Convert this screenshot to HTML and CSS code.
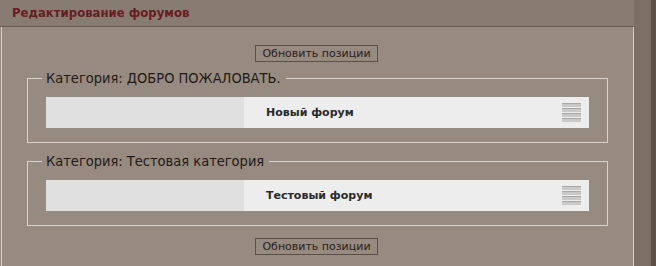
FILE: index.html
```html
<!DOCTYPE html>
<html lang="ru">
<head>
  <meta charset="UTF-8">
  <title>Редактирование форумов</title>
  <link rel="stylesheet" href="styles.css">
</head>
<body>
  <div class="page">
    <div class="main">
      <div class="header">Редактирование форумов</div>
      <div class="panel">
        <div class="actions"><button class="btn">Обновить позиции</button></div>

        <fieldset class="category">
          <legend>Категория: ДОБРО ПОЖАЛОВАТЬ.</legend>
          <div class="forum">
            <div class="forum-side"></div>
            <div class="forum-name">
              <span>Новый форум</span>
              <svg class="handle" width="19" height="20" viewBox="0 0 19 20">
                <g>
                  <rect x="0" y="0" width="19" height="1" fill="#a8a8a8"/>
                  <rect x="0" y="1" width="19" height="3" fill="#c9c9c9"/>
                  <rect x="0" y="5" width="19" height="1" fill="#a8a8a8"/>
                  <rect x="0" y="6" width="19" height="3" fill="#c9c9c9"/>
                  <rect x="0" y="10" width="19" height="1" fill="#a8a8a8"/>
                  <rect x="0" y="11" width="19" height="3" fill="#c9c9c9"/>
                  <rect x="0" y="15" width="19" height="1" fill="#a8a8a8"/>
                  <rect x="0" y="16" width="19" height="3" fill="#c9c9c9"/>
                </g>
              </svg>
            </div>
          </div>
        </fieldset>

        <fieldset class="category">
          <legend>Категория: Тестовая категория</legend>
          <div class="forum">
            <div class="forum-side"></div>
            <div class="forum-name">
              <span>Тестовый форум</span>
              <svg class="handle" width="19" height="20" viewBox="0 0 19 20">
                <g>
                  <rect x="0" y="0" width="19" height="1" fill="#a8a8a8"/>
                  <rect x="0" y="1" width="19" height="3" fill="#c9c9c9"/>
                  <rect x="0" y="5" width="19" height="1" fill="#a8a8a8"/>
                  <rect x="0" y="6" width="19" height="3" fill="#c9c9c9"/>
                  <rect x="0" y="10" width="19" height="1" fill="#a8a8a8"/>
                  <rect x="0" y="11" width="19" height="3" fill="#c9c9c9"/>
                  <rect x="0" y="15" width="19" height="1" fill="#a8a8a8"/>
                  <rect x="0" y="16" width="19" height="3" fill="#c9c9c9"/>
                </g>
              </svg>
            </div>
          </div>
        </fieldset>

        <div class="actions bottom"><button class="btn">Обновить позиции</button></div>
      </div>
    </div>
    <div class="side"></div>
  </div>
</body>
</html>
```

FILE: styles.css
```css
body {
  margin: 0;
  font-family: "DejaVu Sans", Verdana, sans-serif;
  background: #978a80;
  height: 266px;
  overflow: hidden;
}
.page {
  display: flex;
  height: 266px;
}
.main {
  width: 634px;
  background: #978a80;
}
.side {
  flex: 1;
  background: #7b6f66;
  border-right: 5px solid #5c514a;
}
.header {
  height: 26px;
  line-height: 26px;
  padding-left: 12px;
  background: #887c72;
  border-bottom: 1px solid #675b53;
  color: #6b1b20;
  font-family: "DejaVu Sans Condensed", "DejaVu Sans", sans-serif;
  font-stretch: condensed;
  font-size: 13px;
  font-weight: bold;
}
.panel {
  margin-left: 1px;
  border-left: 1px solid #d6cfc8;
  border-right: 1px solid #d6cfc8;
  padding: 0 25px;
  height: 239px;
}
.actions {
  display: flex;
  justify-content: center;
  padding: 18px 2px 0 0;
  margin-bottom: 8px;
}
.actions.bottom {
  padding-top: 0;
  margin-top: 12px;
}
.btn {
  height: 17px;
  padding: 0 6px;
  border: 1px solid #5b4f47;
  background: #978a80;
  color: #2a201b;
  font-family: "DejaVu Sans", Verdana, sans-serif;
  font-size: 11px;
  line-height: 15px;
}
.category {
  margin: 0 0 10px;
  padding: 11px 18px 14px;
  border: 1px solid #d9d3cd;
}
.category legend {
  margin-left: -4px;
  padding: 0 5px 0 4px;
  font-family: "DejaVu Sans Condensed", "DejaVu Sans", sans-serif;
  font-stretch: condensed;
  font-size: 14.5px;
  line-height: 16px;
  color: #221a16;
}
.forum {
  display: flex;
  height: 31px;
}
.forum-side {
  width: 198px;
  background: #dfe0df;
}
.forum-name {
  flex: 1;
  display: flex;
  align-items: center;
  justify-content: space-between;
  padding: 0 8px 0 22px;
  background: #ededed;
  font-size: 11px;
  font-weight: bold;
  color: #2b2b2b;
}
.handle {
  display: block;
}
```
